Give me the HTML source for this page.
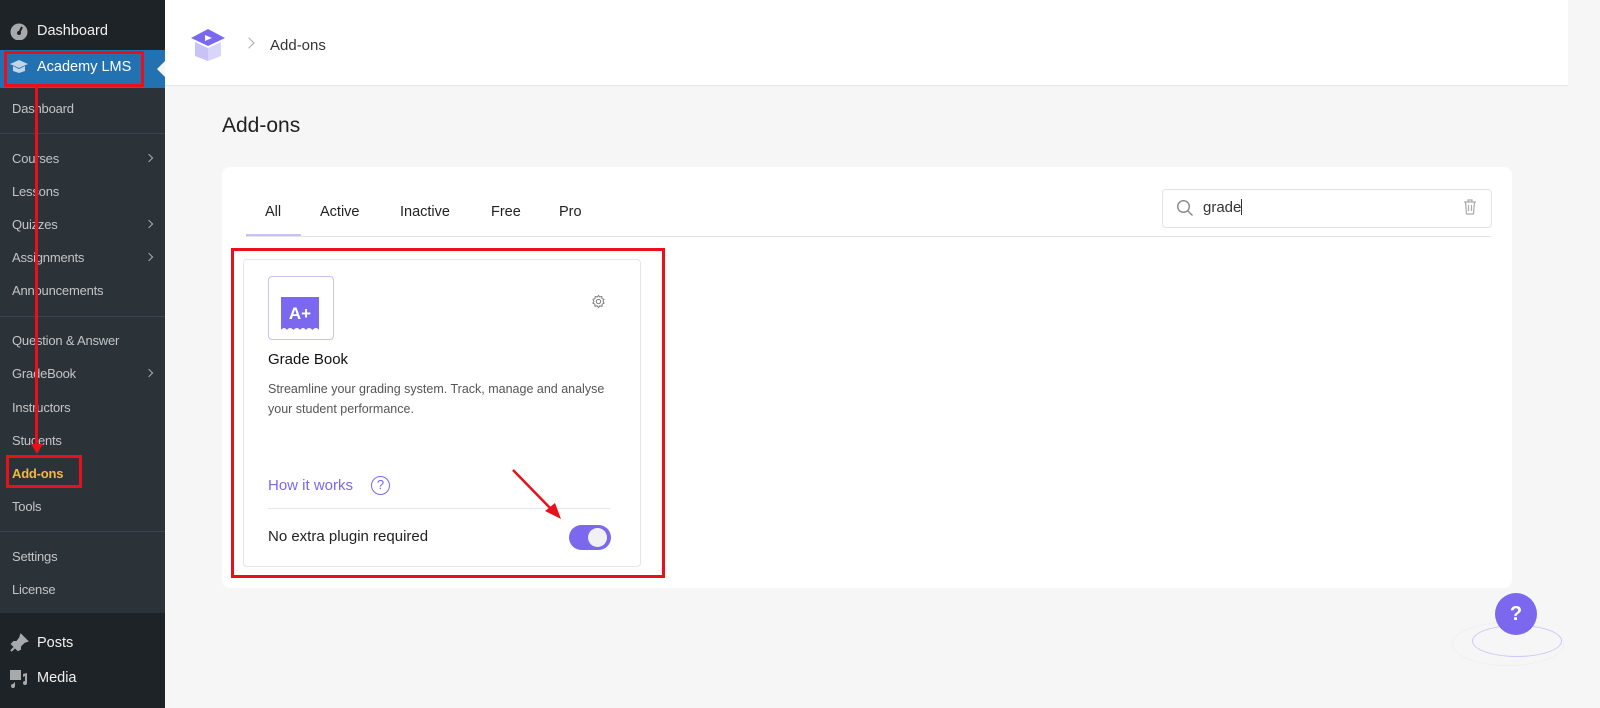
<!DOCTYPE html>
<html><head><meta charset="utf-8"><style>
*{box-sizing:border-box;margin:0;padding:0}
body{width:1600px;height:708px;overflow:hidden;background:#f6f6f6;font-family:"Liberation Sans",sans-serif;position:relative}
.sb{position:absolute;left:0;top:0;width:165px;height:708px;background:#1d2327}
.sub{position:absolute;left:0;top:88px;width:165px;height:525px;background:#2c3338}
.it{position:absolute;left:12px;font-size:13px;color:#f0f0f1;letter-spacing:-.2px}
.top{position:absolute;left:37px;font-size:14.5px;color:#f0f0f1}
.sep{position:absolute;left:0;width:165px;height:1px;background:#3c434a}
.chev{position:absolute;left:146px;width:6px;height:6px;border-right:1.5px solid #a7aaad;border-top:1.5px solid #a7aaad;transform:rotate(45deg)}
.red{position:absolute;border:3px solid #e8101a}
.main{position:absolute;left:165px;top:0;width:1403px;height:86px;background:#fff;border-bottom:1px solid #e6e6e6}
.f{font-family:"Liberation Sans",sans-serif}
</style></head><body>
<div class="sb">
  <svg style="position:absolute;left:9px;top:22px" width="20" height="18" viewBox="0 0 20 18"><circle cx="10" cy="10" r="8.5" fill="#a7aaad"/><circle cx="10" cy="11" r="2" fill="#1d2327"/><path d="M10 11 L13 5" stroke="#1d2327" stroke-width="2"/></svg>
  <div class="top" style="top:23px">Dashboard</div>
  <div style="position:absolute;left:0;top:50px;width:165px;height:38px;background:#2271b1"></div>
  <svg style="position:absolute;left:9px;top:58px" width="20" height="18" viewBox="0 0 20 18"><path d="M1 6 L10 2 L19 6 L10 10Z" fill="#c3d4e6"/><path d="M4 8 V13 L10 15 L16 13 V8 L10 11Z" fill="#c3d4e6"/></svg>
  <div class="top" style="top:59px;color:#fff">Academy LMS</div>
  <div style="position:absolute;left:157px;top:61px;border:8px solid transparent;border-right-color:#f6f6f6;border-left:0"></div>
  <div class="sub">
    <div class="it" style="top:13px;color:#c3c4c7">Dashboard</div>
    <div class="sep" style="top:45px"></div>
    <div class="it" style="top:63px;color:#c3c4c7">Courses</div><div class="chev" style="top:67px"></div>
    <div class="it" style="top:96px;color:#c3c4c7">Lessons</div>
    <div class="it" style="top:129px;color:#c3c4c7">Quizzes</div><div class="chev" style="top:133px"></div>
    <div class="it" style="top:162px;color:#c3c4c7">Assignments</div><div class="chev" style="top:166px"></div>
    <div class="it" style="top:195px;color:#c3c4c7">Announcements</div>
    <div class="sep" style="top:228px"></div>
    <div class="it" style="top:245px;color:#c3c4c7">Question &amp; Answer</div>
    <div class="it" style="top:278px;color:#c3c4c7">GradeBook</div><div class="chev" style="top:282px"></div>
    <div class="it" style="top:312px;color:#c3c4c7">Instructors</div>
    <div class="it" style="top:345px;color:#c3c4c7">Students</div>
    <div class="it" style="top:378px;color:#f0b849;font-weight:bold">Add-ons</div>
    <div class="it" style="top:411px;color:#c3c4c7">Tools</div>
    <div class="sep" style="top:443px"></div>
    <div class="it" style="top:461px;color:#c3c4c7">Settings</div>
    <div class="it" style="top:494px;color:#c3c4c7">License</div>
  </div>
  <svg style="position:absolute;left:9px;top:633px" width="20" height="20" viewBox="0 0 20 20"><path d="M12 2 L18 8 L15 9 L11 13 L11 16 L9 17 L3 11 L5 9 L8 9 L11 5Z M6 14 L2 18" stroke="#a7aaad" stroke-width="2" fill="#a7aaad"/></svg>
  <div class="top" style="top:635px">Posts</div>
  <svg style="position:absolute;left:9px;top:668px" width="20" height="20" viewBox="0 0 20 20"><rect x="1" y="2" width="11" height="10" fill="#a7aaad"/><path d="M14 6 L18 5 V15 A2 2 0 1 1 16 13 V8 L14 9Z" fill="#a7aaad"/><path d="M6 14 V18 A2 2 0 1 1 4 16" fill="#a7aaad"/></svg>
  <div class="top" style="top:670px">Media</div>
</div>
<div class="main">
  <svg style="position:absolute;left:24px;top:26px" width="38" height="36" viewBox="0 0 38 36"><path d="M2 12 L19 3 L36 12 L19 20Z" fill="#7b68ee"/><path d="M6 16 V30 L19 35 V22Z" fill="#c9c2f7"/><path d="M32 16 V30 L19 35 V22Z" fill="#d9d4fa"/><path d="M16 9 L23 12 L16 15Z" fill="#fff"/></svg>
  <div style="position:absolute;left:80px;top:39px;width:8px;height:8px;border-right:1.5px solid #aaa;border-top:1.5px solid #aaa;transform:rotate(45deg)"></div>
  <div style="position:absolute;left:105px;top:37px;font-size:15px;color:#333">Add-ons</div>
</div>
<div style="position:absolute;left:1568px;top:0;width:32px;height:708px;background:#f6f6f6"></div>
<div style="position:absolute;left:222px;top:114px;font-size:21px;color:#222">Add-ons</div>
<div style="position:absolute;left:222px;top:167px;width:1290px;height:421px;background:#fff;border-radius:8px"></div>
<div style="position:absolute;left:246px;top:236px;width:1245px;height:1px;background:#e3e3e3"></div>
<div style="position:absolute;left:246px;top:234px;width:55px;height:2px;background:#c9c2f7"></div>
<div style="position:absolute;top:204px;font-size:14.5px;color:#222;left:265px">All</div>
<div style="position:absolute;top:204px;font-size:14.5px;color:#222;left:320px">Active</div>
<div style="position:absolute;top:204px;font-size:14.5px;color:#222;left:400px">Inactive</div>
<div style="position:absolute;top:204px;font-size:14.5px;color:#222;left:491px">Free</div>
<div style="position:absolute;top:204px;font-size:14.5px;color:#222;left:559px">Pro</div>
<div style="position:absolute;left:1162px;top:189px;width:330px;height:39px;border:1px solid #e3e3e3;border-radius:4px"></div>
<svg style="position:absolute;left:1176px;top:199px" width="18" height="18" viewBox="0 0 18 18"><circle cx="7.5" cy="7.5" r="5.8" stroke="#888" stroke-width="1.4" fill="none"/><path d="M12 12 L16.5 16.5" stroke="#888" stroke-width="1.4"/></svg>
<div style="position:absolute;left:1203px;top:199px;font-size:15px;color:#333">grade<span style="display:inline-block;width:1px;height:16px;background:#333;vertical-align:-3px"></span></div>
<svg style="position:absolute;left:1463px;top:199px" width="14" height="16" viewBox="0 0 14 16"><path d="M1 3 H13 M5 3 V1 H9 V3 M2.5 3 L3.5 15 H10.5 L11.5 3 M5.5 6 V12 M8.5 6 V12" stroke="#aaa" stroke-width="1.2" fill="none"/></svg>
<div style="position:absolute;left:243px;top:259px;width:398px;height:308px;border:1px solid #e6e6e6;border-radius:4px;background:#fff"></div>
<div style="position:absolute;left:268px;top:276px;width:66px;height:64px;border:1.5px solid #c9c2f7;border-radius:4px"></div>
<svg style="position:absolute;left:281px;top:297px" width="38" height="35" viewBox="0 0 38 35"><path d="M0 0 H38 V33 Q35 29 31.5 33 Q28 29 25 33 Q22 29 19 33 Q16 29 12.5 33 Q9 29 6 33 Q3 29 0 33Z" fill="#7b68ee"/><text x="19" y="22" text-anchor="middle" font-family="Liberation Sans" font-weight="bold" font-size="17" fill="#fff">A+</text></svg>
<svg style="position:absolute;left:591px;top:294px" width="15" height="15" viewBox="0 0 16 16"><circle cx="8" cy="8" r="2.3" fill="none" stroke="#777" stroke-width="1"/><path d="M8 1.5 L9.3 3.3 L11.5 2.6 L11.7 4.9 L13.9 5.7 L12.8 7.8 L14 9.8 L11.9 10.8 L11.7 13.2 L9.4 12.6 L8 14.5 L6.6 12.6 L4.3 13.2 L4.1 10.8 L2 9.8 L3.2 7.8 L2.1 5.7 L4.3 4.9 L4.5 2.6 L6.7 3.3Z" fill="none" stroke="#777" stroke-width="1"/></svg>
<div style="position:absolute;left:268px;top:351px;font-size:15px;color:#111">Grade Book</div>
<div style="position:absolute;left:268px;top:379px;font-size:12.5px;color:#555;line-height:20px;width:340px">Streamline your grading system. Track, manage and analyse your student performance.</div>
<div style="position:absolute;left:268px;top:477px;font-size:15px;color:#7b68ee">How it works</div>
<div style="position:absolute;left:371px;top:476px;width:19px;height:19px;border:1.5px solid #7b68ee;border-radius:50%;color:#7b68ee;font-size:13px;text-align:center;line-height:16px">?</div>
<div style="position:absolute;left:268px;top:508px;width:342px;height:1px;background:#e6e6e6"></div>
<div style="position:absolute;left:268px;top:528px;font-size:15px;color:#222">No extra plugin required</div>
<div style="position:absolute;left:569px;top:525px;width:42px;height:25px;border-radius:13px;background:#7b68ee"></div>
<div style="position:absolute;left:588px;top:528px;width:19px;height:19px;border-radius:50%;background:#f1f1f5"></div>
<div style="position:absolute;left:1452px;top:622px;width:112px;height:44px;border-radius:50%;border:1px solid #f0f0f3"></div>
<div style="position:absolute;left:1472px;top:625px;width:90px;height:32px;border-radius:50%;border:1.5px solid #cfc8fa"></div>
<div style="position:absolute;left:1495px;top:593px;width:42px;height:42px;border-radius:50%;background:#7b68ee;color:#fff;font-weight:bold;font-size:20px;text-align:center;line-height:42px">?</div>
<div class="red" style="left:4px;top:51px;width:140px;height:36px"></div>
<div style="position:absolute;left:35px;top:86px;width:3px;height:360px;background:#e8101a"></div>
<div style="position:absolute;left:31px;top:444px;border:6px solid transparent;border-top:10px solid #e8101a;border-bottom:0"></div>
<div class="red" style="left:6px;top:455px;width:76px;height:33px"></div>
<div class="red" style="left:231px;top:248px;width:434px;height:330px"></div>
<svg style="position:absolute;left:505px;top:465px" width="65" height="60" viewBox="0 0 65 60"><path d="M8 5 L48 46" stroke="#e8101a" stroke-width="2.5"/><path d="M56 54 L40 46 L50 38Z" fill="#e8101a"/></svg>
</body></html>
